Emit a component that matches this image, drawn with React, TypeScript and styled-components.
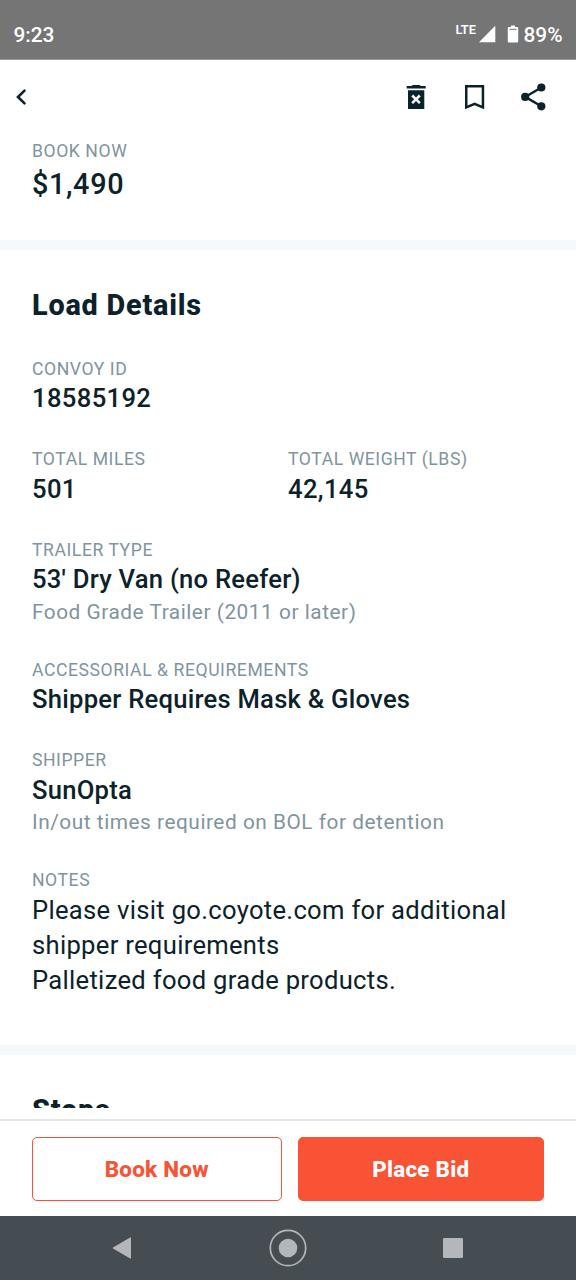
import React from "react";
import styled, { createGlobalStyle, css } from "styled-components";

const ink = "#0c222a";
const muted = "#7f949f";
const accent = "#f75334";

const GlobalStyle = createGlobalStyle`
  * { box-sizing: border-box; }
  body {
    margin: 0;
    background: #fff;
    font-family: Roboto, sans-serif;
    color: ${ink};
  }
`;

const Screen = styled.div`
  width: 576px;
  height: 1280px;
  display: flex;
  flex-direction: column;
  overflow: hidden;
  background: #fff;
`;

const StatusBar = styled.header`
  flex: none;
  height: 60px;
  padding: 10px 13.5px 0 13.5px;
  display: flex;
  align-items: center;
  justify-content: space-between;
  background: #757575;
  border-bottom: 1px solid #9a9a9a;
  color: #fff;
  font-size: 20.8px;
  font-weight: 500;
`;

const StatusIcons = styled.div`
  display: flex;
  align-items: center;
`;

const Network = styled.span`
  font-size: 12.8px;
  line-height: 12px;
  font-weight: 600;
  margin: 0 2px 9px 0;
`;

const SignalIcon = styled.svg`
  width: 18px;
  height: 18px;
  margin: 0 11px 2px 0;
`;

const BatteryIcon = styled.svg`
  width: 12px;
  height: 18px;
  margin: 0 4.6px 2px 0;
`;

const Toolbar = styled.nav`
  flex: none;
  height: 74px;
  padding: 0 27px 0 12px;
  display: flex;
  align-items: center;
  justify-content: space-between;
`;

const Actions = styled.div`
  display: flex;
  align-items: center;
  gap: 26px;
`;

const IconButton = styled.button`
  border: 0;
  padding: 0;
  background: none;
  color: ${ink};
  display: flex;
`;

const Icon = styled.svg`
  width: 32px;
  height: 32px;
  fill: currentColor;
`;

const Content = styled.main`
  flex: none;
  height: 974px;
  overflow: hidden;
`;

const Section = styled.section`
  padding: 0 32px;
`;

const PriceSection = styled(Section)`
  height: 106px;
  padding-top: 6px;
`;

const Divider = styled.div`
  height: 10px;
  background: #f5f9fc;
`;

const Details = styled(Section)`
  height: 795px;
  padding-top: 37px;
`;

const StopsSection = styled(Section)`
  padding-top: 37px;
`;

const Title = styled.h2`
  margin: 0;
  font-size: 28.8px;
  line-height: 36px;
  font-weight: 850;
  letter-spacing: 0.8px;
`;

const Fields = styled.div`
  margin-top: 34.8px;
  display: flex;
  flex-direction: column;
  gap: 32px;
`;

const FieldRow = styled.div`
  display: grid;
  grid-template-columns: 1fr 1fr;
`;

const Label = styled.div`
  font-size: 17.6px;
  line-height: 23.4px;
  letter-spacing: 0.56px;
  color: ${muted};
  white-space: nowrap;
`;

const Value = styled.div<{ $kind?: FieldKind }>`
  font-size: 25.6px;
  line-height: 35.2px;
  font-weight: 500;
  letter-spacing: 0.25px;
  ${(p) => p.$kind === "number" && css`letter-spacing: 0.36px;`}
  ${(p) => p.$kind === "price" && css`font-size: 28.8px; line-height: 42px; letter-spacing: 0.65px;`}
  ${(p) => p.$kind === "note" && css`font-weight: 400; letter-spacing: 0.3px; white-space: pre-line;`}
`;

const Hint = styled.div`
  font-size: 20.8px;
  line-height: 29.2px;
  letter-spacing: 0.54px;
  color: ${muted};
`;

const Footer = styled.footer`
  flex: none;
  margin-top: 11px;
  height: 97px;
  border-top: 2px solid #e0e7ec;
  padding: 15.5px 32px;
  display: flex;
  gap: 16px;
`;

const Button = styled.button<{ $filled?: boolean }>`
  flex: none;
  width: ${(p) => (p.$filled ? 246.5 : 249.5)}px;
  height: 64px;
  border: 1.6px solid ${accent};
  border-radius: 5px;
  background: ${(p) => (p.$filled ? accent : "#fff")};
  color: ${(p) => (p.$filled ? "#fff" : accent)};
  font: 800 22.4px Roboto, sans-serif;
  letter-spacing: 0.25px;
`;

const SystemNav = styled.div`
  flex: none;
  height: 64px;
  background: #454c52;
`;

type FieldKind = "number" | "price" | "note";
type FieldProps = { label: string; value: string; hint?: string; kind?: FieldKind };

const Field = ({ label, value, hint, kind }: FieldProps) => (
  <div>
    <Label>{label}</Label>
    <Value $kind={kind}>{value}</Value>
    {hint && <Hint>{hint}</Hint>}
  </div>
);

export default function App() {
  return (
    <Screen>
      <GlobalStyle />
      <StatusBar>
        <span>9:23</span>
        <StatusIcons>
          <Network>LTE</Network>
          <SignalIcon viewBox="0 0 18 18"><path d="M1 17.3L17.3 .8V17.3Z" fill="#fff" /></SignalIcon>
          <BatteryIcon viewBox="0 0 12 18">
            <path d="M4 .5H8V2H10.2Q11.2 2 11.2 3V16.5Q11.2 17.5 10.2 17.5H1.8Q.8 17.5 .8 16.5V3Q.8 2 1.8 2H4Z" fill="#fff" />
            <path d="M2.5 4.3H9.5" stroke="#757575" strokeWidth="1" />
          </BatteryIcon>
          <span>89%</span>
        </StatusIcons>
      </StatusBar>

      <Toolbar>
        <IconButton aria-label="Back">
          <svg width="20" height="20" viewBox="0 0 20 20" fill="none" stroke="currentColor" strokeWidth="2.6" strokeLinecap="round">
            <path d="M12.5 3.6L6 10L12.5 16.4" />
          </svg>
        </IconButton>
        <Actions>
          <IconButton aria-label="Remove">
            <Icon viewBox="0 0 32 32">
              <path fillRule="evenodd" d="M5.7 5H10.7L11.7 4H18.7L19.7 5H24.7V7.6H5.7ZM7 9.2H23.3V28H7ZM10.3 15.4L13.2 18.3L10.3 21.2L12.1 23L15 20.1L17.9 23L19.7 21.2L16.8 18.3L19.7 15.4L17.9 13.6L15 16.5L12.1 13.6Z" />
            </Icon>
          </IconButton>
          <IconButton aria-label="Save">
            <Icon viewBox="0 0 32 32">
              <path fillRule="evenodd" d="M6 4H25.2V28.3L15.6 24.2L6 28.3ZM8.5 6.6V24.6L15.6 21.5L22.7 24.6V6.6Z" />
            </Icon>
          </IconButton>
          <IconButton aria-label="Share">
            <Icon viewBox="0 0 32 32">
              <path d="M24.3 6.5L8.2 15.9L24.3 25.3" fill="none" stroke="currentColor" strokeWidth="2.4" />
              <circle cx="24.3" cy="6.5" r="4.1" />
              <circle cx="8.2" cy="15.9" r="4.1" />
              <circle cx="24.3" cy="25.3" r="4.1" />
            </Icon>
          </IconButton>
        </Actions>
      </Toolbar>

      <Content>
        <PriceSection>
          <Field label="BOOK NOW" value="$1,490" kind="price" />
        </PriceSection>
        <Divider />
        <Details>
          <Title>Load Details</Title>
          <Fields>
            <Field label="CONVOY ID" value="18585192" kind="number" />
            <FieldRow>
              <Field label="TOTAL MILES" value="501" kind="number" />
              <Field label="TOTAL WEIGHT (LBS)" value="42,145" kind="number" />
            </FieldRow>
            <Field label="TRAILER TYPE" value="53' Dry Van (no Reefer)" hint="Food Grade Trailer (2011 or later)" />
            <Field label="ACCESSORIAL & REQUIREMENTS" value="Shipper Requires Mask & Gloves" />
            <Field label="SHIPPER" value="SunOpta" hint="In/out times required on BOL for detention" />
            <Field
              label="NOTES"
              value={"Please visit go.coyote.com for additional shipper requirements\nPalletized food grade products."}
              kind="note"
            />
          </Fields>
        </Details>
        <Divider />
        <StopsSection>
          <Title>Stops</Title>
        </StopsSection>
      </Content>

      <Footer>
        <Button>Book Now</Button>
        <Button $filled>Place Bid</Button>
      </Footer>

      <SystemNav>
        <svg width="576" height="64" viewBox="0 0 576 64" fill="#b3b7b9">
          <path d="M113 32L130.5 21.8V42.2Z" stroke="#b3b7b9" strokeWidth="1" strokeLinejoin="round" />
          <circle cx="288" cy="32" r="17.7" fill="none" stroke="#b3b7b9" strokeWidth="1.7" />
          <circle cx="288" cy="32" r="9.3" />
          <rect x="443" y="22" width="20" height="20" rx="1.3" />
        </svg>
      </SystemNav>
    </Screen>
  );
}
